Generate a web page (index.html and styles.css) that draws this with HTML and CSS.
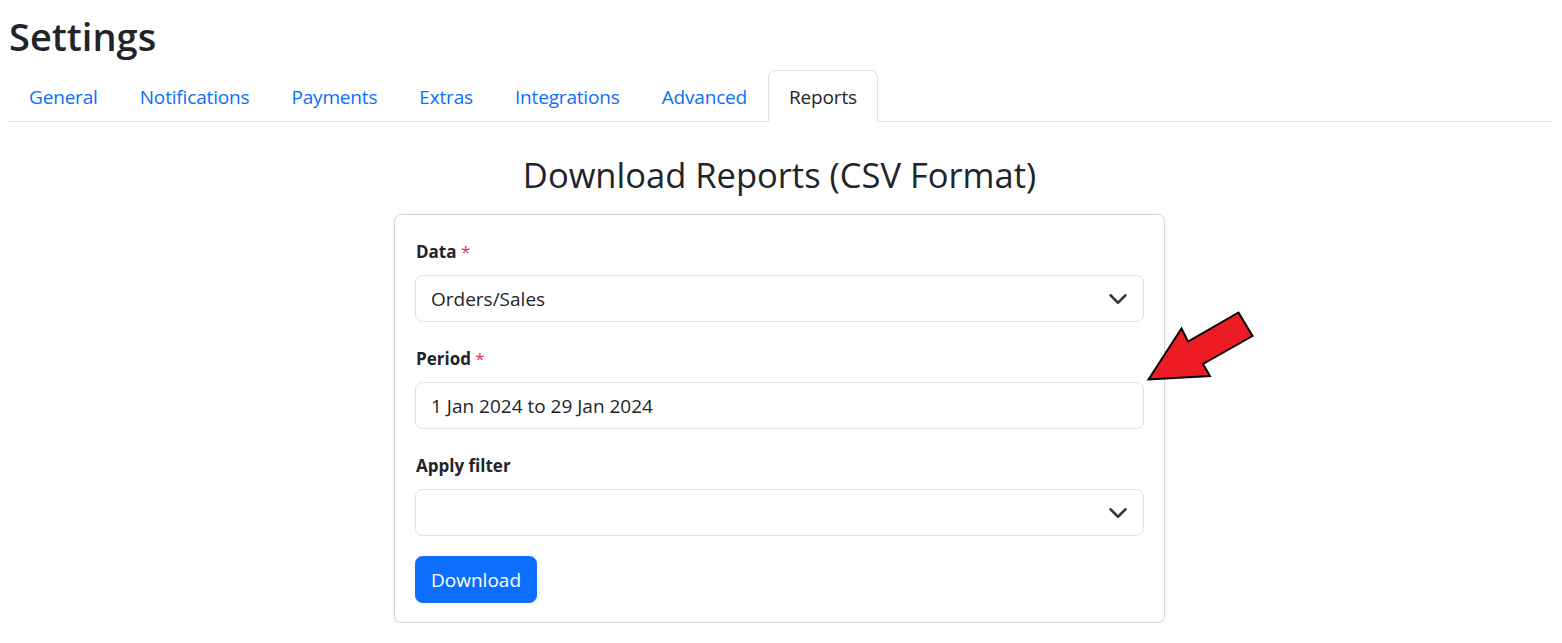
FILE: index.html
```html
<!DOCTYPE html>
<html lang="en">
<head>
<meta charset="utf-8">
<title>Settings</title>
<link rel="stylesheet" href="styles.css">
</head>
<body>
<div class="page">
  <h1 class="title">Settings</h1>
  <ul class="tabs">
    <li><a class="tab" href="#">General</a></li>
    <li><a class="tab" href="#">Notifications</a></li>
    <li><a class="tab" href="#">Payments</a></li>
    <li><a class="tab" href="#">Extras</a></li>
    <li><a class="tab" href="#">Integrations</a></li>
    <li><a class="tab" href="#">Advanced</a></li>
    <li><a class="tab active" href="#">Reports</a></li>
  </ul>
  <h2 class="section-title">Download Reports (CSV Format)</h2>
  <div class="card">
    <div class="field">
      <label class="label">Data <span class="req">*</span></label>
      <div class="select">Orders/Sales<svg class="chev" viewBox="0 0 16 16"><path d="m2 5 6 6 6-6" fill="none" stroke="#343a40" stroke-width="2" stroke-linecap="round" stroke-linejoin="round"/></svg></div>
    </div>
    <div class="field">
      <label class="label">Period <span class="req">*</span></label>
      <div class="input">1 Jan 2024 to 29 Jan 2024</div>
    </div>
    <div class="field">
      <label class="label">Apply filter</label>
      <div class="select"><svg class="chev" viewBox="0 0 16 16"><path d="m2 5 6 6 6-6" fill="none" stroke="#343a40" stroke-width="2" stroke-linecap="round" stroke-linejoin="round"/></svg></div>
    </div>
    <button class="btn">Download</button>
  </div>
  <svg class="arrow" width="110" height="76" viewBox="1146 308 110 76">
    <polygon points="1148.5,379.5 1181.5,328.5 1188,341.5 1238.5,312.5 1252.5,336 1203,364 1210,376" fill="#ed1c24" stroke="#000" stroke-width="2" stroke-linejoin="miter"/>
  </svg>
</div>
</body>
</html>
```

FILE: styles.css
```css
* { box-sizing: border-box; }
html, body { margin: 0; padding: 0; background: #fff; }
body {
  font-family: "Open Sans", "Noto Sans", sans-serif;
  color: #212529;
}
.page {
  position: relative;
  padding: 12px 11px 0 8px;
}
.title {
  margin: 0 0 10px 0;
  font-size: 38px;
  line-height: 48px;
  font-weight: 600;
  padding-left: 1px;
}
.tabs {
  list-style: none;
  margin: 0;
  padding: 0;
  display: flex;
  border-bottom: 1px solid #dee2e6;
}
.tab {
  display: block;
  padding: 11px 20px 9px;
  font-size: 19px;
  line-height: 30px;
  letter-spacing: -0.17px;
  color: #0d6efd;
  text-decoration: none;
  border: 1px solid transparent;
  border-top-left-radius: 7.5px;
  border-top-right-radius: 7.5px;
  margin-bottom: -1px;
}
.tab.active {
  color: #212529;
  background: #fff;
  border-color: #dee2e6 #dee2e6 #fff;
}
.section-title {
  text-align: center;
  font-size: 34.5px;
  line-height: 42px;
  font-weight: 500;
  margin: 32px 0 0 0;
}
.card {
  width: 771px;
  margin: 18px auto 0;
  border: 1px solid #d3d4d5;
  border-radius: 7.5px;
  box-shadow: 0 2.5px 5px rgba(0,0,0,0.075);
  padding: 24px 20px 19px;
  display: flex;
  flex-direction: column;
  gap: 24px;
}
.field {
  display: flex;
  flex-direction: column;
  gap: 10px;
}
.label {
  font-size: 17px;
  line-height: 26px;
  font-weight: 700;
  padding-left: 1px;
}
.req { color: #dc3545; font-weight: 400; }
.select, .input {
  position: relative;
  height: 47px;
  border: 1px solid #dee2e6;
  border-radius: 7.5px;
  padding: 7.5px 45px 7.5px 15px;
  font-size: 19px;
  line-height: 30px;
  color: #212529;
}
.chev {
  position: absolute;
  right: 15px;
  top: 13px;
  width: 20px;
  height: 20px;
}
.btn {
  align-self: flex-start;
  margin-top: -4px;
  height: 47px;
  padding: 7.5px 15px;
  font: inherit;
  font-size: 19px;
  line-height: 30px;
  color: #fff;
  background: #0d6efd;
  border: 1px solid #0d6efd;
  border-radius: 7.5px;
}
.arrow {
  position: absolute;
  left: 1146px;
  top: 308px;
}
```
